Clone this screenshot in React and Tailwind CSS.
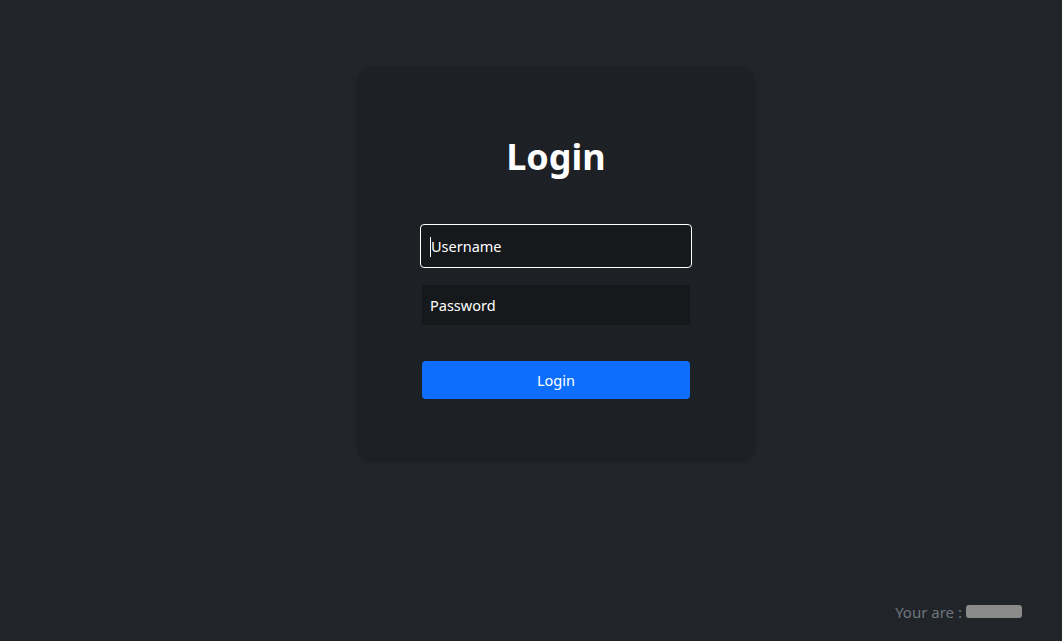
import React from "react";

export default function App() {
  return (
    <div
      className="min-h-screen h-[641px] bg-[#212529] flex flex-col text-white"
      style={{ fontFamily: '"Noto Sans", "Open Sans", sans-serif' }}
    >
      <div className="flex justify-center pt-[67px] pl-[50px]">
        <div className="w-[400px] h-[396px] rounded-[16px] bg-[#1d2024] flex flex-col items-center">
          <h1 className="mt-[65px] text-[36px] leading-[50px] font-bold text-white">Login</h1>
          <div className="mt-[42px] w-[272px] h-[44px] rounded-[4px] border border-white bg-[#16191c] flex items-center pl-[9px] pt-[2px]">
            <span className="w-px h-[20px] bg-white"></span>
            <span className="text-[14.5px] text-white">Username</span>
          </div>
          <div className="mt-[17px] w-[268px] h-[40px] bg-[#16191c] flex items-center pl-[8px] pt-[2px]">
            <span className="text-[14.5px] text-white">Password</span>
          </div>
          <button className="mt-[36px] w-[268px] h-[38px] rounded-[4px] bg-[#0d6efd] text-white text-[14.5px] pt-[2px]">
            Login
          </button>
        </div>
      </div>
      <div className="mt-auto flex justify-end items-center pr-[40px] pb-[18px]">
        <span className="text-[15px] text-[#6c757d]">Your are : </span>
        <span className="ml-[4px] w-[56px] h-[13px] bg-[#8a8a8a] rounded-[3px] blur-[0.5px]"></span>
      </div>
    </div>
  );
}
